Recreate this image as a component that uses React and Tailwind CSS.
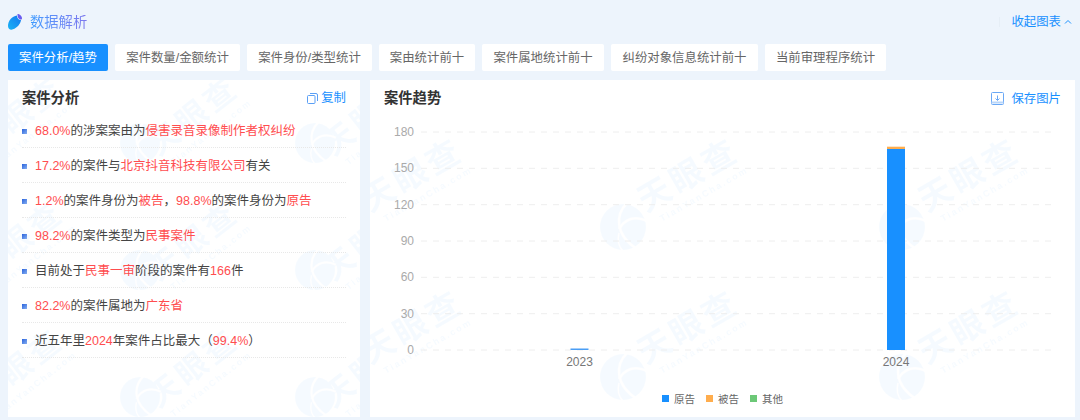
import React from "react";

const tabs = [
  { label: "案件分析/趋势", width: "w-[100px]" },
  { label: "案件数量/金额统计", width: "w-[125px]" },
  { label: "案件身份/类型统计", width: "w-[125px]" },
  { label: "案由统计前十", width: "w-[96px]" },
  { label: "案件属地统计前十", width: "w-[122px]" },
  { label: "纠纷对象信息统计前十", width: "w-[147px]" },
  { label: "当前审理程序统计", width: "w-[121px]" },
];

// 红色高亮片段
const R = ({ children }) => <span className="text-[#ff4d4f]">{children}</span>;

const rows = [
  <><R>68.0%</R>的涉案案由为<R>侵害录音录像制作者权纠纷</R></>,
  <><R>17.2%</R>的案件与<R>北京抖音科技有限公司</R>有关</>,
  <><R>1.2%</R>的案件身份为<R>被告</R>，<R>98.8%</R>的案件身份为<R>原告</R></>,
  <><R>98.2%</R>的案件类型为<R>民事案件</R></>,
  <>目前处于<R>民事一审</R>阶段的案件有<R>166</R>件</>,
  <><R>82.2%</R>的案件属地为<R>广东省</R></>,
  <>近五年里<R>2024</R>年案件占比最大（<R>99.4%</R>）</>,
];

const ticks = [
  { label: "180", y: 14 },
  { label: "150", y: 50.3 },
  { label: "120", y: 86.7 },
  { label: "90", y: 123 },
  { label: "60", y: 159.3 },
  { label: "30", y: 195.7 },
  { label: "0", y: 232 },
];

const legend = [
  { label: "原告", x: 292, color: "#1890ff" },
  { label: "被告", x: 336, color: "#ffad4d" },
  { label: "其他", x: 380, color: "#6cc877" },
];

const leftWords = [
  [12, 38], [187, 38], [362, 38],
  [12, 163], [187, 163], [362, 163],
  [12, 290], [187, 290], [362, 290],
];
const leftLogos = [
  [132, 63], [307, 63],
  [132, 190], [307, 190],
  [132, 317], [307, 317],
];
const rightWords = [
  [44, 98], [320, 98], [601, 98],
  [44, 250], [320, 250], [601, 250],
];
const rightLogos = [
  [253, 147], [532, 147],
  [253, 297], [532, 297],
];

const Word = ({ x, y, angle, size, gap }) => (
  <g transform={`translate(${x} ${y}) rotate(${angle})`} fill="#1890ff">
    <text x="0" y="8" textAnchor="middle" fontSize={size} fontWeight="700" letterSpacing={gap}>天眼查</text>
    <text x="4" y="24" textAnchor="middle" fontSize="9" fontWeight="700" letterSpacing="2">TianYanCha.com</text>
  </g>
);

const Logo = ({ x, y, r }) => (
  <g transform={`translate(${x} ${y}) scale(${r / 23})`}>
    <circle r="23" fill="#1890ff" />
    <path d="M4-24C-8-12-8 8 14 22" fill="none" stroke="#fff" strokeWidth="2.500" />
    <path d="M24-6C12-12 2-8-4 2" fill="none" stroke="#fff" strokeWidth="2.500" />
    <path d="M-4 6C-6 14-4 20 0 24" fill="none" stroke="#fff" strokeWidth="1.500" />
  </g>
);

const App = () => {
  return (
    <div className="w-[1080px] h-[420px] bg-[#edf4fc] overflow-hidden font-['Liberation_Sans','Noto_Sans_CJK_SC',sans-serif]">
      <div className="h-[44px] flex items-center justify-between pl-2 pr-2">
        <div className="flex items-center gap-[8px]">
          <svg width="14" height="16" viewBox="0 0 14 16">
            <defs>
              <linearGradient id="drop" x1="0" y1="1" x2="1" y2="0">
                <stop offset="0" stopColor="#18b4f5" />
                <stop offset="1" stopColor="#1478f0" />
              </linearGradient>
            </defs>
            <path d="M9 1.500C4 2 0 7 0 12c0 3 2.500 4.300 5 3.300C9 14 12.500 10 13 6 10.500 6 9 4 9 1.500Z" fill="url(#drop)" />
            <path d="M9.500 0C11.500 0 14 2 14 4.500 14 5 13.500 5.500 13 5.500 11 5.500 9.500 4 9.500 0Z" fill="#6a5cf0" />
          </svg>
          <span className="text-[14.3px] leading-none bg-gradient-to-r from-[#3a9bff] to-[#7d78ee] bg-clip-text text-transparent">
            数据解析
          </span>
        </div>
        <div className="flex items-center text-[12.4px] text-[#1890ff]">
          <span className="w-px h-[10px] bg-[#e6eef6] mr-[11px]" />
          <span>收起图表</span>
          <svg width="8" height="5" viewBox="0 0 8 5" className="ml-[3px]" fill="none" stroke="#1890ff" strokeWidth="1">
            <path d="M1 4.500L4 1.500L7 4.500" />
          </svg>
        </div>
      </div>

      <div className="flex gap-[7px] pl-2">
        {tabs.map((tab, i) => (
          <div
            key={tab.label}
            className={`${tab.width} h-[27px] pt-[1px] flex items-center justify-center rounded-[2px] text-[12.4px] ${
              i === 0 ? "bg-[#1890ff] text-white" : "bg-white text-[#666]"
            }`}
          >
            {tab.label}
          </div>
        ))}
      </div>

      <div className="flex gap-[10px] pl-2 mt-[9px]">
        <div className="relative w-[352px] h-[337px] bg-white overflow-hidden">
          <svg className="absolute inset-0 w-full h-full pointer-events-none opacity-[0.035]">
            {leftWords.map((w) => (
              <Word key={`${w[0]}-${w[1]}`} x={w[0]} y={w[1]} angle={-38} size={31} gap={4} />
            ))}
            {leftLogos.map((l) => (
              <Logo key={`${l[0]}-${l[1]}`} x={l[0]} y={l[1]} r={20} />
            ))}
          </svg>
          <div className="relative h-[33px] flex items-center justify-between pl-[14px] pr-[14px] pt-[4px]">
            <span className="text-[14.3px] font-bold text-[#333]">案件分析</span>
            <span className="flex items-center gap-[3px] text-[12.4px] text-[#1890ff]">
              <svg width="11" height="11" viewBox="0 0 11 11" fill="none" stroke="#5a9ff5" strokeWidth="1">
                <rect x="0.500" y="2.500" width="7.500" height="8" rx="1" />
                <path d="M3 .5h6a1.500 1.500 0 0 1 1.500 1.500v6" />
              </svg>
              复制
            </span>
          </div>
          <div className="relative mx-[14px]">
            {rows.map((row, i) => (
              <div
                key={i}
                className="h-[35px] pt-[2px] flex items-center border-b border-dotted border-[#e8e8e8] text-[12.5px] text-[#444]"
              >
                <span className="w-[5px] h-[5px] mr-[8px] bg-gradient-to-br from-[#2a62dc] to-[#86aef0]" />
                <span>{row}</span>
              </div>
            ))}
          </div>
        </div>

        <div className="relative w-[705px] h-[337px] bg-white overflow-hidden">
          <svg className="absolute inset-0 w-full h-full pointer-events-none opacity-[0.035]">
            {rightWords.map((w) => (
              <Word key={`${w[0]}-${w[1]}`} x={w[0]} y={w[1]} angle={-30} size={33} gap={4} />
            ))}
            {rightLogos.map((l) => (
              <Logo key={`${l[0]}-${l[1]}`} x={l[0]} y={l[1]} r={23} />
            ))}
          </svg>
          <div className="relative h-[38px] flex items-center justify-between pl-[14px] pr-[14px]">
            <span className="text-[14.3px] font-bold text-[#333]">案件趋势</span>
            <span className="flex items-center text-[12.4px] text-[#1890ff]">
              <svg width="13" height="13" viewBox="0 0 13 13" fill="none" stroke="#6aa8f5" strokeWidth="1" className="mr-[7px]">
                <rect x="0.500" y="0.500" width="12" height="12" rx="1" />
                <path d="M.5 10.500h12" stroke="#b9d6fa" strokeWidth="2" />
                <path d="M6.500 3.500v4.500M4.500 6.500l2 2 2-2" />
              </svg>
              保存图片
            </span>
          </div>
          <svg className="relative block" width="705" height="299" viewBox="0 0 705 299">
            {ticks.map((t) => (
              <g key={t.label}>
                <line x1="51" x2="684" y1={t.y} y2={t.y} stroke="#eeeeee" strokeDasharray="6 6" />
                <text x="44" y={t.y + 4} textAnchor="end" fontSize="12" fill="#aaa">
                  {t.label}
                </text>
              </g>
            ))}
            <rect x="200.500" y="230.500" width="18" height="1.500" fill="#4a9ef5" />
            <rect x="517" y="31" width="18" height="201" fill="#1890ff" />
            <rect x="517" y="28.700" width="18" height="2.300" fill="#ffad4d" />
            <text x="209.500" y="248" textAnchor="middle" fontSize="12" fill="#777">2023</text>
            <text x="526" y="248" textAnchor="middle" fontSize="12" fill="#777">2024</text>
            {legend.map((l) => (
              <g key={l.label}>
                <rect x={l.x} y="277" width="7" height="7" fill={l.color} />
                <text x={l.x + 12} y="284.500" fontSize="10.500" fill="#666">
                  {l.label}
                </text>
              </g>
            ))}
          </svg>
        </div>
      </div>
    </div>
  );
};

export default App;
